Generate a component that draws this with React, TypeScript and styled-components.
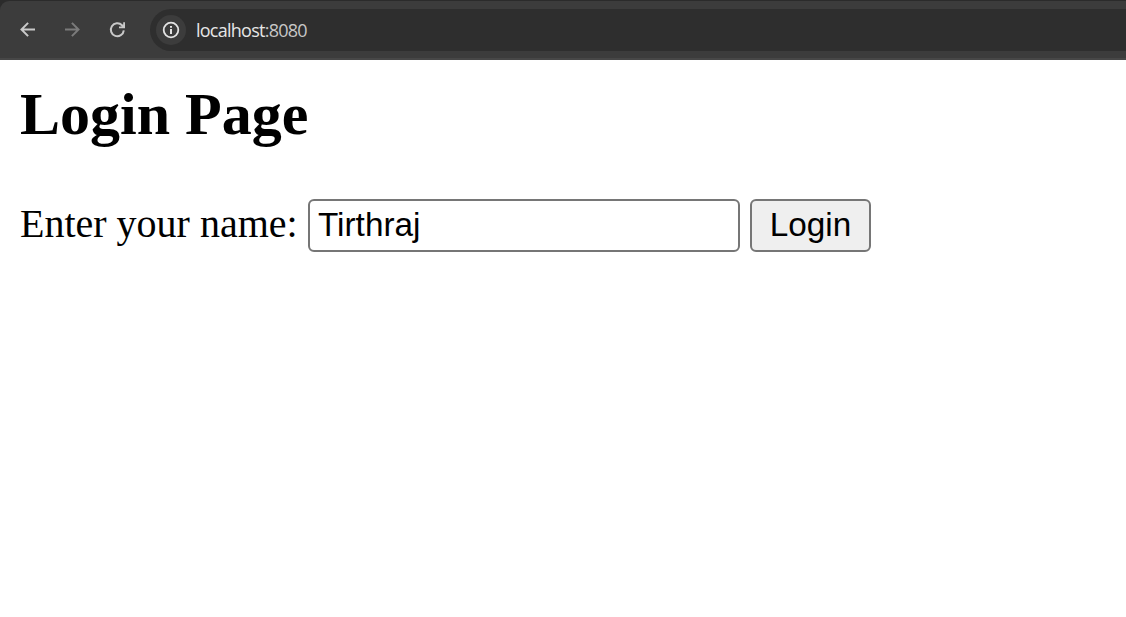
import React, { useState } from "react";
import styled, { createGlobalStyle } from "styled-components";

const GlobalStyle = createGlobalStyle`
  * { box-sizing: border-box; }
  body { margin: 0; background: #fff; overflow: hidden; }
`;

const Browser = styled.div`
  height: 617px;
  display: flex;
  flex-direction: column;
  background: #fff;
`;

const Frame = styled.div`
  height: 60px;
  padding-top: 1px;
  background: #2b2b2b;
`;

const Toolbar = styled.header`
  height: 59px;
  display: flex;
  align-items: flex-start;
  padding: 8px 0 0 16px;
  background: #3c3c3c;
  border-bottom: 2px solid #474747;
  border-top-left-radius: 9px;
`;

const NavButtons = styled.nav`
  display: flex;
  gap: 21px;
  padding-top: 9px;
`;

const NavButton = styled.button<{ $dim?: boolean }>`
  width: 24px;
  height: 24px;
  padding: 0;
  border: 0;
  background: none;
  color: ${(p) => (p.$dim ? "#7b7b7b" : "#c9c9c9")};

  svg { display: block; }
`;

const AddressBar = styled.div`
  flex: 1;
  height: 42px;
  margin-left: 20px;
  padding-left: 6px;
  display: flex;
  align-items: center;
  background: #2e2e2e;
  border-radius: 21px 0 0 21px;
`;

const SiteInfo = styled.span`
  width: 30px;
  height: 30px;
  display: grid;
  place-items: center;
  border-radius: 50%;
  background: #3c3c3c;
  color: #e3e3e3;

  svg { display: block; }
`;

const Url = styled.span`
  margin-left: 10px;
  padding-top: 1px;
  font: 18px/25px "Open Sans", sans-serif;
  letter-spacing: -0.75px;
  color: #e6e6e6;
`;

const Port = styled.span`
  color: #c7c7c7;
`;

const Page = styled.main`
  padding: 20px;
  font-family: "Liberation Serif", serif;
  color: #000;
`;

const Title = styled.h2`
  margin: 0 0 50px;
  font-size: 60px;
  line-height: 69px;
`;

const LoginForm = styled.form`
  display: flex;
  align-items: center;
`;

const Label = styled.label`
  width: 288px;
  padding-bottom: 3px;
  font-size: 40px;
  line-height: 46px;
  white-space: nowrap;
`;

const NameInput = styled.input`
  width: 432px;
  height: 53px;
  padding: 0 8px 2px;
  border: 2px solid #767676;
  border-radius: 6px;
  outline: none;
  background: #fff;
  color: #000;
  font: 33.333px "Liberation Sans", sans-serif;
`;

const LoginButton = styled.button`
  width: 121px;
  height: 53px;
  margin-left: 10px;
  padding: 0 0 2px;
  border: 2px solid #767676;
  border-radius: 6px;
  background: #efefef;
  color: #000;
  font: 33.333px "Liberation Sans", sans-serif;
`;

const BackIcon = () => (
  <svg width="24" height="24" fill="none" stroke="currentColor" strokeWidth="2">
    <path d="M19 11.5H5.5M12.1 4.9L5.5 11.5L12.1 18.1" />
  </svg>
);

const ForwardIcon = () => (
  <svg width="24" height="24" fill="none" stroke="currentColor" strokeWidth="2">
    <path d="M4 11.5H17.5M10.9 4.9L17.5 11.5L10.9 18.1" />
  </svg>
);

const ReloadIcon = () => (
  <svg width="24" height="24" fill="none" stroke="currentColor" strokeWidth="2">
    <path d="M17.8 12.4A6.5 6.5 0 1 1 16 7.2L17.2 8.4" />
    <path d="M18.1 4.2V9.4H13" strokeWidth="1.8" />
    <path d="M18.6 5.6V9.6H14.6Z" fill="currentColor" stroke="none" />
  </svg>
);

const InfoIcon = () => (
  <svg width="18" height="18" fill="none" stroke="currentColor">
    <circle cx="9" cy="9" r="7.3" strokeWidth="1.8" />
    <path d="M9 8V13M9 5V6.8" strokeWidth="2" />
  </svg>
);

export default function App() {
  const [name, setName] = useState("Tirthraj");
  return (
    <Browser>
      <GlobalStyle />
      <Frame>
        <Toolbar>
          <NavButtons>
            <NavButton aria-label="Back"><BackIcon /></NavButton>
            <NavButton aria-label="Forward" $dim><ForwardIcon /></NavButton>
            <NavButton aria-label="Reload"><ReloadIcon /></NavButton>
          </NavButtons>
          <AddressBar>
            <SiteInfo><InfoIcon /></SiteInfo>
            <Url>localhost<Port>:8080</Port></Url>
          </AddressBar>
        </Toolbar>
      </Frame>
      <Page>
        <Title>Login Page</Title>
        <LoginForm onSubmit={(e) => e.preventDefault()}>
          <Label htmlFor="name">Enter your name:</Label>
          <NameInput id="name" value={name} spellCheck={false} onChange={(e) => setName(e.target.value)} />
          <LoginButton type="submit">Login</LoginButton>
        </LoginForm>
      </Page>
    </Browser>
  );
}
